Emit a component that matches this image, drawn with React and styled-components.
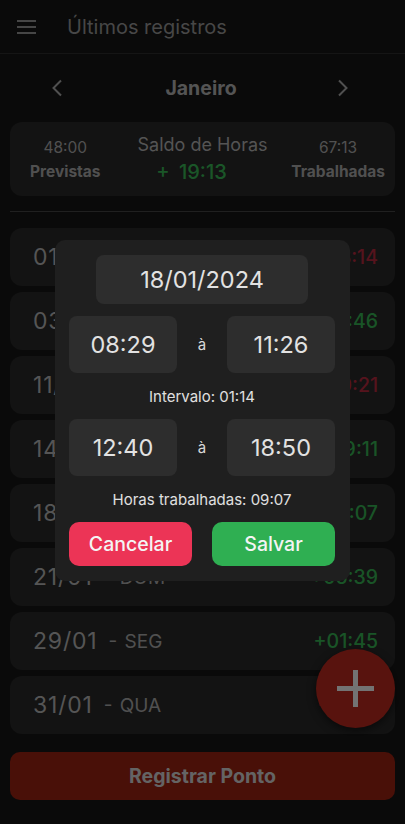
import React from "react";
import styled, { createGlobalStyle } from "styled-components";

const GlobalStyle = createGlobalStyle`
  html, body { margin: 0; padding: 0; background: #161616; }
  body { font-family: Inter, Roboto, "Noto Sans", "Liberation Sans", sans-serif; }
  * { box-sizing: border-box; }
`;

const Screen = styled.div`
  position: relative;
  width: 405px;
  height: 824px;
  overflow: hidden;
  background: #161616;
  display: flex;
  flex-direction: column;
`;

const Header = styled.header`
  height: 54px;
  display: flex;
  align-items: center;
  padding-left: 17px;
  gap: 31px;
  border-bottom: 1px solid #2c2c2c;
`;

const Title = styled.h1`
  margin: 0;
  font-size: 20px;
  font-weight: 400;
  color: #949494;
`;

const MonthNav = styled.nav`
  height: 68px;
  display: flex;
  align-items: center;
  justify-content: space-between;
  padding: 0 56px 0 51px;
`;

const Month = styled.span`
  font-size: 19.5px;
  font-weight: 700;
  color: #b0b0b0;
  margin-left: 2px;
`;

const SummaryCard = styled.section`
  margin: 0 10px;
  height: 74px;
  border-radius: 12px;
  background: #282828;
  padding: 0 10px;
  display: grid;
  grid-template-columns: 1fr auto 1fr;
  align-items: center;
`;

const Side = styled.div`
  justify-self: ${(p) => (p.$side === "end" ? "end" : "start")};
  margin-left: ${(p) => (p.$side === "end" ? "0" : "10px")};
  display: flex;
  flex-direction: column;
  align-items: center;
  color: #a8a8a8;
  padding-top: 1px;
`;

const SideValue = styled.span`
  font-size: 15.5px;
  line-height: 24px;
`;

const SideLabel = styled.span`
  font-size: 15.5px;
  font-weight: 700;
  line-height: 24px;
`;

const Center = styled.div`
  display: flex;
  flex-direction: column;
  align-items: center;
`;

const CenterLabel = styled.span`
  font-size: 18px;
  color: #b0b0b0;
  line-height: 24px;
  margin-bottom: 2px;
`;

const Balance = styled.span`
  font-size: 20px;
  font-weight: 500;
  color: #38b455;
  line-height: 26px;
  word-spacing: 4px;
  margin-right: 22px;
`;

const Divider = styled.hr`
  margin: 15px 10px 16px;
  border: none;
  height: 1px;
  background: #444444;
`;

const List = styled.ul`
  list-style: none;
  margin: 0 10px;
  padding: 0;
  display: flex;
  flex-direction: column;
  gap: 6px;
`;

const Row = styled.li`
  height: 58px;
  border-radius: 12px;
  background: #282828;
  display: flex;
  align-items: center;
  padding: 0 17px 0 23px;
`;

const DateText = styled.span`
  font-size: 23px;
  letter-spacing: 0.8px;
  color: #b2b2b2;
`;

const Weekday = styled.span`
  font-size: 19px;
  color: #a8a8a8;
  margin-left: 11px;
  word-spacing: 2px;
`;

const Delta = styled.span`
  margin-left: auto;
  font-size: 19.5px;
  font-weight: 500;
  color: ${(p) => (p.$neg ? "#b4283e" : "#36b052")};
`;

const RegisterButton = styled.button`
  margin: 18px 10px 0;
  height: 48px;
  border: none;
  border-radius: 10px;
  background: #9a2212;
  color: #d2d2d2;
  font-family: inherit;
  font-size: 19.5px;
  font-weight: 700;
`;

const Fab = styled.button`
  position: absolute;
  left: 316px;
  top: 649px;
  width: 79px;
  height: 79px;
  border-radius: 50%;
  border: none;
  background: #b8281e;
  display: flex;
  align-items: center;
  justify-content: center;
  padding: 0;
  box-shadow: 0 3px 8px rgba(0, 0, 0, 0.5);
`;

const Backdrop = styled.div`
  position: absolute;
  inset: 0;
  background: rgba(0, 0, 0, 0.52);
  display: flex;
  align-items: center;
  justify-content: center;
  padding-bottom: 3px;
`;

const Modal = styled.div`
  width: 295px;
  border-radius: 10px;
  background: #1f1f1f;
  padding: 15px 15px 15px 14px;
  display: flex;
  flex-direction: column;
  align-items: center;
  color: #e2e2e2;
`;

const DateBox = styled.div`
  width: 212px;
  height: 49px;
  border-radius: 8px;
  background: #2d2d2d;
  display: flex;
  align-items: center;
  justify-content: center;
  font-size: 23.5px;
  margin-bottom: 12px;
  padding-bottom: 1px;
`;

const TimeRow = styled.div`
  width: 100%;
  display: flex;
  align-items: center;
  justify-content: space-between;
`;

const TimeBox = styled.div`
  width: 108px;
  height: 57px;
  border-radius: 8px;
  background: #2d2d2d;
  display: flex;
  align-items: center;
  justify-content: center;
  font-size: 23.5px;
`;

const Sep = styled.span`
  font-size: 15px;
  color: #d8d8d8;
`;

const Info = styled.div`
  height: 46px;
  display: flex;
  align-items: center;
  font-size: 15px;
  color: #e0e0e0;
`;

const Actions = styled.div`
  width: 100%;
  display: flex;
  justify-content: space-between;
`;

const ActionButton = styled.button`
  width: 123px;
  height: 44px;
  border: none;
  border-radius: 10px;
  background: ${(p) => (p.$variant === "save" ? "#2faf52" : "#ec3456")};
  color: #f4f4f4;
  font-family: inherit;
  font-size: 19.5px;
  font-weight: 500;
  padding: 0;
`;

const Menu = () => (
  <svg width="19" height="14" viewBox="0 0 19 14" aria-hidden>
    <g stroke="#939393" strokeWidth="2">
      <line x1="0" y1="1" x2="19" y2="1" />
      <line x1="0" y1="7" x2="19" y2="7" />
      <line x1="0" y1="13" x2="19" y2="13" />
    </g>
  </svg>
);

const Chevron = ({ dir }) => (
  <svg width="12" height="18" viewBox="0 0 12 18" aria-hidden>
    <polyline
      points={dir === "left" ? "10,1.5 2.5,9 10,16.5" : "2,1.5 9.5,9 2,16.5"}
      fill="none"
      stroke="#a8a8a8"
      strokeWidth="2"
    />
  </svg>
);

const Plus = () => (
  <svg width="37" height="37" viewBox="0 0 37 37" aria-hidden>
    <g stroke="#f0f0f0" strokeWidth="5">
      <line x1="0" y1="18.5" x2="37" y2="18.5" />
      <line x1="18.5" y1="0" x2="18.5" y2="37" />
    </g>
  </svg>
);

const rows = [
  { date: "01/01", day: "SEG", delta: "-08:14", neg: true },
  { date: "03/01", day: "QUA", delta: "+00:46" },
  { date: "11/01", day: "QUI", delta: "-00:21", neg: true },
  { date: "14/01", day: "DOM", delta: "+09:11" },
  { date: "18/01", day: "QUI", delta: "+01:07" },
  { date: "21/01", day: "DOM", delta: "+05:39" },
  { date: "29/01", day: "SEG", delta: "+01:45" },
  { date: "31/01", day: "QUA", delta: "-00:12", neg: true },
];

export default function App() {
  return (
    <>
      <GlobalStyle />
      <Screen>
        <Header>
          <Menu />
          <Title>Últimos registros</Title>
        </Header>
        <MonthNav>
          <Chevron dir="left" />
          <Month>Janeiro</Month>
          <Chevron dir="right" />
        </MonthNav>
        <SummaryCard>
          <Side $side="start">
            <SideValue>48:00</SideValue>
            <SideLabel>Previstas</SideLabel>
          </Side>
          <Center>
            <CenterLabel>Saldo de Horas</CenterLabel>
            <Balance>+ 19:13</Balance>
          </Center>
          <Side $side="end">
            <SideValue>67:13</SideValue>
            <SideLabel>Trabalhadas</SideLabel>
          </Side>
        </SummaryCard>
        <Divider />
        <List>
          {rows.map((r) => (
            <Row key={r.date}>
              <DateText>{r.date}</DateText>
              <Weekday>- {r.day}</Weekday>
              <Delta $neg={r.neg}>{r.delta}</Delta>
            </Row>
          ))}
        </List>
        <RegisterButton>Registrar Ponto</RegisterButton>
        <Fab aria-label="Adicionar">
          <Plus />
        </Fab>
        <Backdrop>
          <Modal>
            <DateBox>18/01/2024</DateBox>
            <TimeRow>
              <TimeBox>08:29</TimeBox>
              <Sep>à</Sep>
              <TimeBox>11:26</TimeBox>
            </TimeRow>
            <Info>Intervalo: 01:14</Info>
            <TimeRow>
              <TimeBox>12:40</TimeBox>
              <Sep>à</Sep>
              <TimeBox>18:50</TimeBox>
            </TimeRow>
            <Info>Horas trabalhadas: 09:07</Info>
            <Actions>
              <ActionButton $variant="cancel">Cancelar</ActionButton>
              <ActionButton $variant="save">Salvar</ActionButton>
            </Actions>
          </Modal>
        </Backdrop>
      </Screen>
    </>
  );
}
